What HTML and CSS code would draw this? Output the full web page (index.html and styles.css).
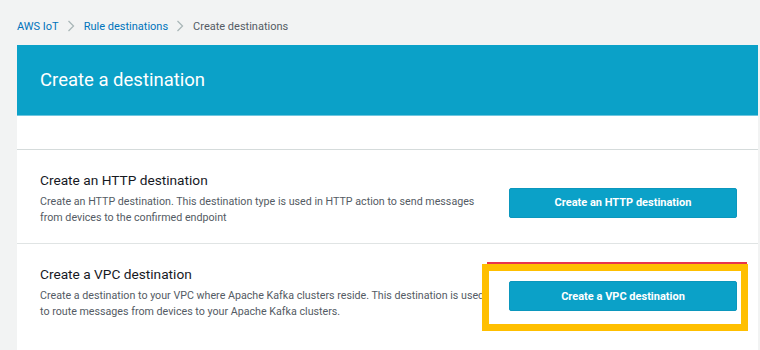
FILE: index.html
```html
<!DOCTYPE html>
<html lang="en">
<head>
    <meta charset="UTF-8">
    <meta name="viewport" content="width=device-width, initial-scale=1.0">
    <title>Create a destination</title>
    <link rel="stylesheet" href="styles.css">
</head>
<body>
    <nav class="breadcrumbs">
        <a href="#">AWS IoT</a>
        <svg class="sep" width="8" height="12" viewBox="0 0 8 12"><path d="M1.5 1l5 5-5 5" fill="none" stroke="#aab7b8" stroke-width="1.3"/></svg>
        <a href="#">Rule destinations</a>
        <svg class="sep" width="8" height="12" viewBox="0 0 8 12"><path d="M1.5 1l5 5-5 5" fill="none" stroke="#aab7b8" stroke-width="1.3"/></svg>
        <span class="current">Create destinations</span>
    </nav>

    <div class="page">
        <div class="page-header">
            <h1>Create a destination</h1>
        </div>
        <div class="card">
            <div class="card-top"></div>
            <div class="option">
                <div class="option-text">
                    <h2>Create an HTTP destination</h2>
                    <p>Create an HTTP destination. This destination type is used in HTTP action to send messages from devices to the confirmed endpoint</p>
                </div>
                <button class="primary-btn">Create an HTTP destination</button>
            </div>
            <div class="option option-vpc">
                <div class="option-text">
                    <h2>Create a VPC destination</h2>
                    <p>Create a destination to your VPC where Apache Kafka clusters reside. This destination is used to route messages from devices to your Apache Kafka clusters.</p>
                </div>
                <button class="primary-btn">Create a VPC destination</button>
                <div class="red-mark"></div>
                <div class="highlight"></div>
            </div>
        </div>
    </div>
</body>
</html>
```

FILE: styles.css
```css
body {
    margin: 0;
    padding: 0 2px 0 17px;
    background: #f2f3f3;
    font-family: Roboto, "Liberation Sans", sans-serif;
    color: #16191f;
    height: 350px;
    overflow: hidden;
}
.breadcrumbs {
    display: flex;
    align-items: center;
    height: 45px;
    font-size: 11px;
    padding-top: 7px;
    box-sizing: border-box;
}
.breadcrumbs a {
    color: #0073bb;
    text-decoration: none;
}
.breadcrumbs .sep {
    margin: 0 9px 0 8px;
}
.breadcrumbs .current {
    color: #545b64;
}
.page-header {
    background: #0ba1c8;
    height: 70px;
    display: flex;
    align-items: center;
    padding-left: 23px;
    border-bottom: 1px solid #6fc6df;
}
.page-header h1 {
    margin: 0;
    color: #fff;
    font-size: 18.5px;
    font-weight: 400;
}
.card {
    background: #fff;
    height: 240px;
}
.card-top {
    height: 33px;
    border-bottom: 1px solid #d5dbdb;
}
.option {
    display: flex;
    align-items: center;
    gap: 14px;
    padding: 20px 21px 20px 23px;
    height: 94px;
    box-sizing: border-box;
    border-bottom: 1px solid #e0e4e4;
}
.option .option-text {
    padding-top: 5px;
}
.option-vpc {
    position: relative;
    border-bottom: none;
    align-items: flex-start;
    padding-top: 17px;
}
.option-vpc .primary-btn {
    margin-top: 20px;
}
.option-text {
    flex: 1;
}
.option-text h2 {
    margin: 0 0 6px 0;
    font-size: 13.7px;
    font-weight: 400;
    color: #16191f;
}
.option-text p {
    margin: 0;
    font-size: 10.7px;
    line-height: 16px;
    color: #545b64;
}
.primary-btn {
    width: 228px;
    height: 30px;
    flex-shrink: 0;
    background: #0ba1c8;
    border: 1px solid #0b97bd;
    border-radius: 2px;
    color: #fff;
    font-family: inherit;
    font-size: 11px;
    font-weight: 700;
    margin-top: 12px;
}
.red-mark {
    position: absolute;
    left: 470px;
    top: 18px;
    width: 260px;
    height: 2px;
    background: #e8354d;
}
.highlight {
    position: absolute;
    left: 465px;
    top: 20px;
    width: 252px;
    height: 53px;
    border: 7px solid #ffbf00;
}
```
